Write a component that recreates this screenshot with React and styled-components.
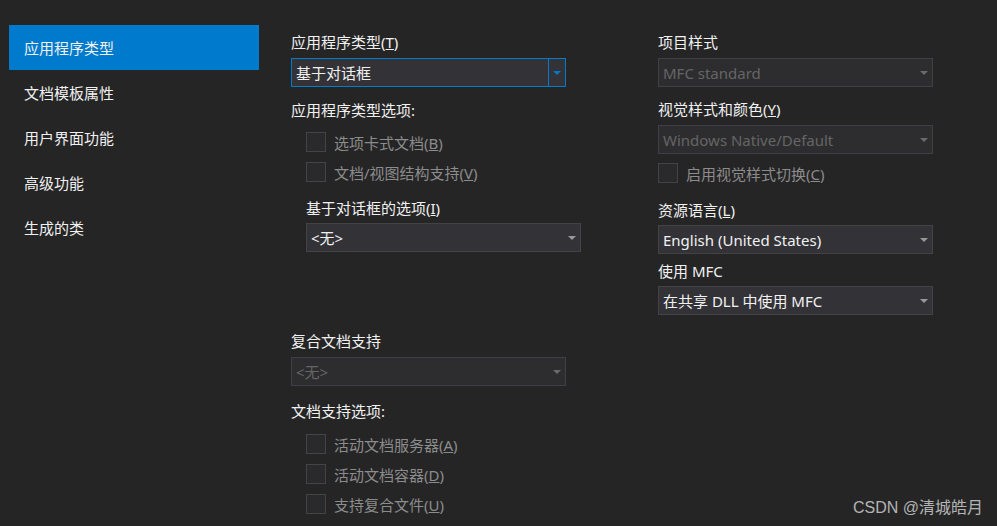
import React from 'react'
import styled, { createGlobalStyle } from 'styled-components'

const GlobalStyle = createGlobalStyle`
  html, body {
    margin: 0;
    padding: 0;
    background: #252526;
  }
  body {
    font-family: "Noto Sans", "Noto Sans CJK SC", sans-serif;
    color: #f1f1f1;
  }
`

const Page = styled.div`
  position: relative;
  width: 997px;
  height: 526px;
  display: flex;
  background: #252526;
  overflow: hidden;
`

const Sidebar = styled.ul`
  list-style: none;
  margin: 25px 0 0 9px;
  padding: 0;
  width: 250px;
  display: flex;
  flex-direction: column;
`

const NavItem = styled.li`
  height: 45px;
  display: flex;
  align-items: center;
  padding-left: 15px;
  font-size: 15px;
  color: #f1f1f1;
  background: ${(p) => (p.active ? '#007acc' : 'transparent')};
`

const Content = styled.div`
  display: grid;
  grid-template-columns: 290px 275px;
  column-gap: 77px;
  margin-left: 32px;
`

const Column = styled.div`
  display: flex;
  flex-direction: column;
`

const Label = styled.div`
  font-size: 15px;
  line-height: 20px;
  height: 20px;
  margin-top: ${(p) => p.mt || 0}px;
  margin-left: ${(p) => (p.indent ? 15 : 0)}px;
  color: #f1f1f1;
  white-space: nowrap;
`

const Combo = styled.div`
  box-sizing: border-box;
  width: 275px;
  height: 29px;
  margin-top: ${(p) => p.mt || 0}px;
  margin-left: ${(p) => (p.indent ? 15 : 0)}px;
  display: flex;
  align-items: center;
  background: ${(p) => (p.disabled ? '#2d2d30' : '#333337')};
  border: 1px solid ${(p) => (p.focused ? '#007acc' : p.disabled ? '#3f3f46' : '#434346')};
  font-size: 15px;
  color: ${(p) => (p.disabled ? '#656565' : '#f1f1f1')};
`

const ComboText = styled.span`
  flex: 1;
  padding-left: 4px;
  white-space: nowrap;
  overflow: hidden;
`

const ArrowBox = styled.span`
  width: 16px;
  height: 100%;
  display: flex;
  align-items: center;
  justify-content: center;
  border-left: 1px solid ${(p) => (p.focused ? '#007acc' : 'transparent')};
  &::after {
    content: '';
    width: 0;
    height: 0;
    border-left: 4px solid transparent;
    border-right: 4px solid transparent;
    border-top: 4px solid ${(p) => (p.focused ? '#007acc' : p.disabled ? '#6a6a6a' : '#999999')};
  }
`

const CheckRow = styled.div`
  display: flex;
  align-items: center;
  height: 20px;
  margin-top: ${(p) => p.mt || 0}px;
  margin-left: ${(p) => (p.indent ? 15 : 0)}px;
  font-size: 15px;
  color: #8c8c8c;
  white-space: nowrap;
`

const Box = styled.span`
  box-sizing: border-box;
  width: 20px;
  height: 20px;
  margin-right: 8px;
  background: #2a2a2c;
  border: 1px solid #434346;
`

const Watermark = styled.div`
  position: absolute;
  right: 14px;
  bottom: 8px;
  font-family: "Liberation Sans", "Noto Sans CJK SC", sans-serif;
  font-size: 16px;
  color: #b4b4b4;
`

function ComboBox({ value, disabled, focused, mt, indent }) {
  return (
    <Combo disabled={disabled} focused={focused} mt={mt} indent={indent}>
      <ComboText>{value}</ComboText>
      <ArrowBox disabled={disabled} focused={focused} />
    </Combo>
  )
}

function Check({ children, mt, indent }) {
  return (
    <CheckRow mt={mt} indent={indent}>
      <Box />
      <span>{children}</span>
    </CheckRow>
  )
}

const navItems = ['应用程序类型', '文档模板属性', '用户界面功能', '高级功能', '生成的类']

export default function App() {
  return (
    <>
      <GlobalStyle />
      <Page>
        <Sidebar>
          {navItems.map((name, i) => (
            <NavItem key={name} active={i === 0}>
              {name}
            </NavItem>
          ))}
        </Sidebar>
        <Content>
          <Column>
            <Label mt={32}>
              应用程序类型(<u>T</u>)
            </Label>
            <ComboBox value='基于对话框' focused mt={6} />
            <Label mt={13}>应用程序类型选项:</Label>
            <Check indent mt={12}>
              选项卡式文档(<u>B</u>)
            </Check>
            <Check indent mt={10}>
              文档/视图结构支持(<u>V</u>)
            </Check>
            <Label indent mt={16}>
              基于对话框的选项(<u>I</u>)
            </Label>
            <ComboBox value='<无>' indent mt={5} />
            <Label mt={79}>复合文档支持</Label>
            <ComboBox value='<无>' disabled mt={6} />
            <Label mt={15}>文档支持选项:</Label>
            <Check indent mt={13}>
              活动文档服务器(<u>A</u>)
            </Check>
            <Check indent mt={10}>
              活动文档容器(<u>D</u>)
            </Check>
            <Check indent mt={10}>
              支持复合文件(<u>U</u>)
            </Check>
          </Column>
          <Column>
            <Label mt={32}>项目样式</Label>
            <ComboBox value='MFC standard' disabled mt={6} />
            <Label mt={12}>
              视觉样式和颜色(<u>Y</u>)
            </Label>
            <ComboBox value='Windows Native/Default' disabled mt={6} />
            <Check mt={9}>
              启用视觉样式切换(<u>C</u>)
            </Check>
            <Label mt={17}>
              资源语言(<u>L</u>)
            </Label>
            <ComboBox value='English (United States)' mt={5} />
            <Label mt={7}>使用 MFC</Label>
            <ComboBox value='在共享 DLL 中使用 MFC' mt={5} />
          </Column>
        </Content>
        <Watermark>CSDN @清城皓月</Watermark>
      </Page>
    </>
  )
}
